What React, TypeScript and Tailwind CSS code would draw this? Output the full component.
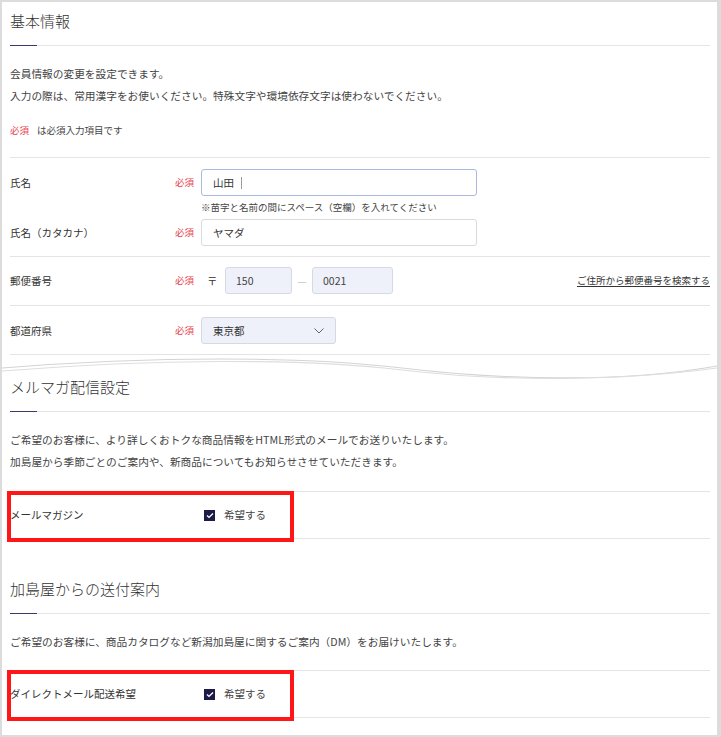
import React from "react";

const F = "font-['Noto_Sans_CJK_JP','Noto_Sans',sans-serif]";

function Heading({ title, pt }: { title: string; pt: string }) {
  return (
    <div className={`relative ${pt} pb-[14px] border-b border-[#e4e4e4]`}>
      <h2 className="text-[15px] leading-[20px] text-[#333] font-light">{title}</h2>
      <span className="absolute left-0 -bottom-px h-[1.5px] w-[27px] bg-[#3b3b6b]" />
    </div>
  );
}

function Req() {
  return <span className="w-[26px] shrink-0 text-[9.5px] text-[#e8424a]">必須</span>;
}

function Check({ label }: { label: string }) {
  return (
    <div className="relative h-[48px] border-t border-b border-[#e4e4e4] flex items-center">
      <span className="w-[194px] shrink-0 text-[10.5px] text-[#333]">{label}</span>
      <span className="w-[11px] h-[11px] bg-[#1c1c46] flex items-center justify-center">
        <svg width="8" height="7" viewBox="0 0 8 7">
          <polyline points="1,3.6 3,5.4 7,1.4" fill="none" stroke="#fff" strokeWidth="1.4" />
        </svg>
      </span>
      <span className="ml-[9px] text-[10.5px] text-[#444]">希望する</span>
      <span className="absolute left-[-3px] top-[-1px] w-[287px] h-[51px] border-4 border-[#ff1616]" />
    </div>
  );
}

export default function App() {
  return (
    <div className={`${F} w-[721px] h-[737px] bg-[#dcdcdc] pt-[2px] pl-[2px] pr-[4px] pb-[2px]`}>
      <div className="bg-white h-[733px] pl-[8px] pr-[7px] overflow-hidden">
        <Heading title="基本情報" pt="pt-[9px]" />
        <div className="mt-[17px] text-[10.7px] leading-[22px] text-[#444]">
          <p>会員情報の変更を設定できます。</p>
          <p>入力の際は、常用漢字をお使いください。特殊文字や環境依存文字は使わないでください。</p>
        </div>
        <p className="mt-[12px] mb-[16px] text-[9.5px] leading-[22px] text-[#444]">
          <span className="text-[#e8424a] mr-[8px]">必須</span>は必須入力項目です
        </p>

        <div className="border-t border-[#e4e4e4] pt-[11px] pb-[10px] text-[10.5px] text-[#333]">
          <div className="flex items-center h-[27px]">
            <span className="w-[165px] shrink-0">氏名</span>
            <Req />
            <div className="w-[276px] h-[27px] border border-[#a9b9e2] rounded-[3px] bg-white flex items-center pl-[11px]">
              山田<span className="ml-[7px] inline-block w-px h-[12px] bg-[#9a9a9a]" />
            </div>
          </div>
          <div className="pl-[191px] text-[9.5px] leading-[23px] text-[#444]">
            ※苗字と名前の間にスペース（空欄）を入れてください
          </div>
          <div className="flex items-center h-[27px]">
            <span className="w-[165px] shrink-0">氏名（カタカナ）</span>
            <Req />
            <div className="w-[276px] h-[27px] border border-[#dadada] rounded-[3px] bg-white flex items-center pl-[11px]">
              ヤマダ
            </div>
          </div>
        </div>

        <div className="border-t border-[#e4e4e4] pt-[10px] pb-[11px] text-[10.5px] text-[#333]">
          <div className="flex items-center h-[27px]">
            <span className="w-[165px] shrink-0">郵便番号</span>
            <Req />
            <span className="ml-[6px] w-[18px]">〒</span>
            <div className="w-[67px] h-[27px] border border-[#d6d9e4] rounded-[3px] bg-[#eef1fa] flex items-center pl-[10px] text-[#444]">150</div>
            <span className="w-[20px] text-center text-[#c8c8c8]">—</span>
            <div className="w-[81px] h-[27px] border border-[#d6d9e4] rounded-[3px] bg-[#eef1fa] flex items-center pl-[10px] text-[#444]">0021</div>
            <a className="ml-auto text-[9.5px] text-[#333] underline underline-offset-2">ご住所から郵便番号を検索する</a>
          </div>
        </div>

        <div className="border-t border-b border-[#e4e4e4] pt-[11px] pb-[10px] text-[10.5px] text-[#333]">
          <div className="flex items-center h-[27px]">
            <span className="w-[165px] shrink-0">都道府県</span>
            <Req />
            <div className="w-[135px] h-[27px] border border-[#d6d9e4] rounded-[3px] bg-[#eef1fa] flex items-center justify-between pl-[11px] pr-[11px]">
              東京都
              <svg width="10" height="6" viewBox="0 0 10 6">
                <polyline points="0.5,0.5 5,5 9.5,0.5" fill="none" stroke="#666" strokeWidth="1" />
              </svg>
            </div>
          </div>
        </div>

        <div className="relative h-[18px] -ml-[8px] -mr-[7px]">
          <svg className="absolute left-0 top-0" width="715" height="30" viewBox="0 0 715 30" preserveAspectRatio="none">
            <path d="M0,13 C150,1 300,1 400,13 S 620,28 715,11" fill="none" stroke="#d4d4d4" strokeWidth="1.2" />
            <path d="M0,16 C150,4 300,3 400,15 S 620,26 715,13" fill="none" stroke="#dedede" strokeWidth="1.2" />
          </svg>
        </div>

        <Heading title="メルマガ配信設定" pt="pt-[4px]" />
        <div className="mt-[17px] mb-[18px] text-[10.7px] leading-[22px] text-[#444]">
          <p>ご希望のお客様に、より詳しくおトクな商品情報をHTML形式のメールでお送りいたします。</p>
          <p>加島屋から季節ごとのご案内や、新商品についてもお知らせさせていただきます。</p>
        </div>
        <Check label="メールマガジン" />

        <Heading title="加島屋からの送付案内" pt="pt-[40px]" />
        <div className="mt-[17px] mb-[17px] text-[10.7px] leading-[22px] text-[#444]">
          <p>ご希望のお客様に、商品カタログなど新潟加島屋に関するご案内（DM）をお届けいたします。</p>
        </div>
        <Check label="ダイレクトメール配送希望" />
      </div>
    </div>
  );
}
